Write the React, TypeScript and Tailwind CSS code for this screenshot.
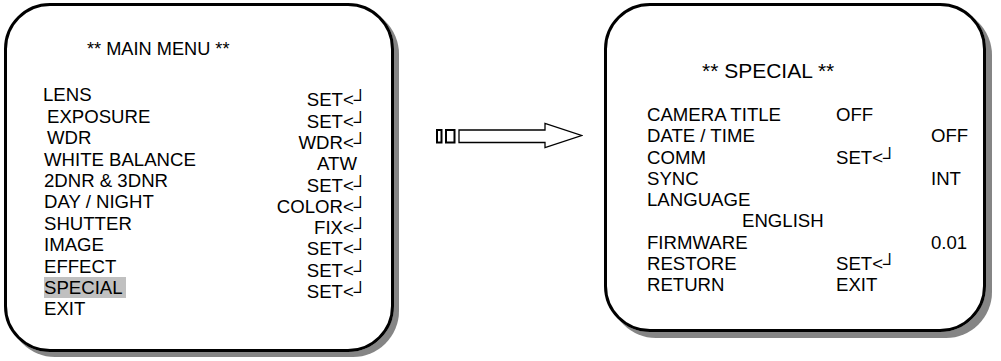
import React from "react";

const RET = "<\u2518";

export default function App() {
  const leftItems: [string, string][] = [
    ["LENS", "pl-0"],
    ["EXPOSURE", "pl-[4px]"],
    ["WDR", "pl-[4px]"],
    ["WHITE BALANCE", "pl-[1px]"],
    ["2DNR & 3DNR", "pl-[1px]"],
    ["DAY / NIGHT", "pl-[1px]"],
    ["SHUTTER", "pl-[1px]"],
    ["IMAGE", "pl-[1px]"],
    ["EFFECT", "pl-[1px]"],
    ["SPECIAL", "pl-[1px]"],
    ["EXIT", "pl-[1px]"],
  ];
  const rightVals = [
    "SET" + RET,
    "SET" + RET,
    "WDR" + RET,
    "ATW",
    "SET" + RET,
    "COLOR" + RET,
    "FIX" + RET,
    "SET" + RET,
    "SET" + RET,
    "SET" + RET,
  ];
  const special: [string, string, string][] = [
    ["CAMERA TITLE", "OFF", ""],
    ["DATE / TIME", "", "OFF"],
    ["COMM", "SET" + RET, ""],
    ["SYNC", "", "INT"],
    ["LANGUAGE", "", ""],
  ];
  const special2: [string, string, string][] = [
    ["FIRMWARE", "", "0.01"],
    ["RESTORE", "SET" + RET, ""],
    ["RETURN", "EXIT", ""],
  ];
  return (
    <div
      className="w-[1001px] h-[361px] bg-white text-black flex items-start pl-[4px] pt-[3px]"
      style={{ fontFamily: '"Liberation Sans", Arial, sans-serif' }}
    >
      {/* Left box */}
      <div className="w-[390px] h-[349px] shrink-0 border-[3px] border-black rounded-[46px] shadow-[5px_5px_0_#858585] flex flex-col">
        <div className="pl-[80px] mt-[33px] text-[18.2px] leading-[21.4px]">** MAIN MENU **</div>
        <div className="flex mt-[24px]">
          <div className="pl-[36px] flex flex-col text-[18.6px] leading-[21.4px]">
            {leftItems.map(([t, p]) => (
              <div key={t} className={p}>
                <span className={t === "SPECIAL" ? "bg-[#c0c0c0] pr-[3px] inline-block" : ""}>{t}</span>
              </div>
            ))}
          </div>
          <div className="ml-auto mr-[24px] mt-[5px] flex flex-col items-end text-[18.6px] leading-[21.3px]">
            {rightVals.map((v, i) => (
              <div key={i} className={v === "ATW" ? "pr-[10px]" : ""}>
                {v}
              </div>
            ))}
          </div>
        </div>
      </div>

      {/* Arrow */}
      <svg width="147" height="28" viewBox="0 0 147 28" className="ml-[42px] mt-[118px] shrink-0">
        <rect x="1" y="9" width="4.5" height="12.5" fill="white" stroke="black" strokeWidth="2" />
        <rect x="10" y="9" width="8.5" height="12.5" fill="white" stroke="black" strokeWidth="2" />
        <polygon
          points="23,9 109,9 109,2.5 145.5,14.5 109,26.5 109,21.5 23,21.5"
          fill="white"
          stroke="black"
          strokeWidth="1.3"
          strokeLinejoin="miter"
        />
      </svg>

      {/* Right box */}
      <div className="ml-[21px] w-[382px] h-[329px] shrink-0 border-[3px] border-black rounded-[46px] shadow-[6px_6px_0_#858585] flex flex-col">
        <div className="pl-[95px] mt-[53px] text-[21px] leading-[24px]">** SPECIAL **</div>
        <div className="mt-[21px] pl-[40px] text-[18.6px] leading-[21.25px]">
          {special.map(([a, b, c]) => (
            <div key={a} className="grid grid-cols-[189px_95px_auto]">
              <div>{a}</div>
              <div>{b}</div>
              <div>{c}</div>
            </div>
          ))}
          <div className="pl-[95px]">ENGLISH</div>
          {special2.map(([a, b, c]) => (
            <div key={a} className="grid grid-cols-[189px_95px_auto]">
              <div>{a}</div>
              <div>{b}</div>
              <div>{c}</div>
            </div>
          ))}
        </div>
      </div>
    </div>
  );
}
